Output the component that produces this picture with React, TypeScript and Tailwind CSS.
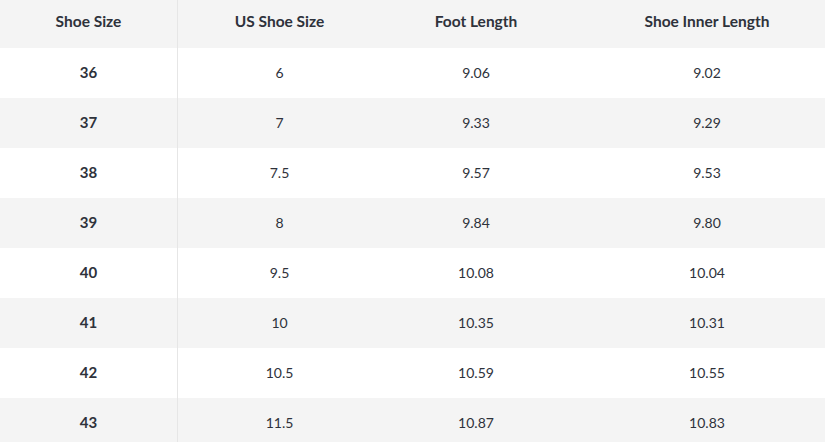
const rows = [
  ["36", "6", "9.06", "9.02"],
  ["37", "7", "9.33", "9.29"],
  ["38", "7.5", "9.57", "9.53"],
  ["39", "8", "9.84", "9.80"],
  ["40", "9.5", "10.08", "10.04"],
  ["41", "10", "10.35", "10.31"],
  ["42", "10.5", "10.59", "10.55"],
  ["43", "11.5", "10.87", "10.83"],
];

const cols = ["w-[178px] border-r border-[#e6e6e6]", "w-[203px]", "w-[190px]", "w-[272px]"];

export default function App() {
  return (
    <div className="w-[825px] h-[442px] overflow-hidden bg-white text-[#2e323b]" style={{ fontFamily: "Lato, 'Noto Sans', sans-serif" }}>
      <div className="w-[843px]">
        <div className="flex h-12 bg-[#f4f4f4] text-[15.5px] font-bold">
          {["Shoe Size", "US Shoe Size", "Foot Length", "Shoe Inner Length"].map((h, i) => (
            <div key={h} className={`${cols[i]} flex items-center justify-center pb-1`}>{h}</div>
          ))}
        </div>
        {rows.map((r, ri) => (
          <div key={r[0]} className={`flex h-[50px] ${ri % 2 === 1 ? "bg-[#f4f4f4]" : "bg-white"}`}>
            {r.map((c, i) => (
              <div key={i} className={`${cols[i]} flex items-center justify-center pb-px ${i === 0 ? "font-bold text-[15px]" : "text-[14px]"}`}>{c}</div>
            ))}
          </div>
        ))}
      </div>
    </div>
  );
}
